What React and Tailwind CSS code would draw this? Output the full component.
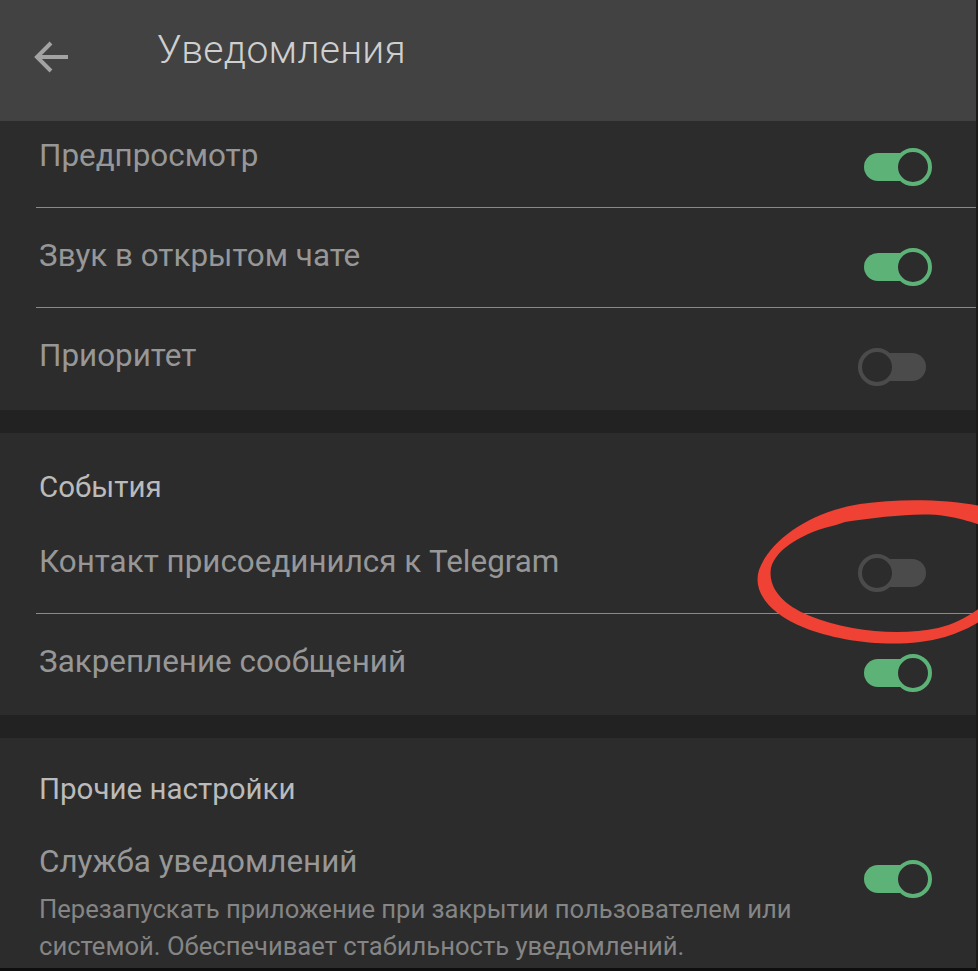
import React from "react";

function Toggle({ on }) {
  return (
    <div className="relative w-[74px] h-[40px] shrink-0">
      <div
        className={
          "absolute left-[6px] right-[6px] top-[6px] h-[28px] rounded-full " +
          (on ? "bg-[#5cb277]" : "bg-[#4b4b4b]")
        }
      />
      <div
        className={
          "absolute top-[1px] w-[38px] h-[38px] rounded-full border-[4px] bg-[#2c2c2c] " +
          (on ? "right-0 border-[#5cb277]" : "left-0 border-[#4b4b4b]")
        }
      />
    </div>
  );
}

function Row({ label, on, divider, className = "" }) {
  return (
    <div className={"relative h-[100px] flex justify-between items-start pl-[39px] pr-[44px] " + className}>
      <div className="pt-[28px] text-[31.4px] leading-[40px] text-[#979797]">{label}</div>
      <div className="pt-[39px]">
        <Toggle on={on} />
      </div>
      {divider && (
        <div className="absolute left-[36px] right-0 bottom-0 h-[1.5px] bg-[#8a8a8a]" />
      )}
    </div>
  );
}

export default function App() {
  return (
    <div
      className="relative w-[978px] h-[971px] overflow-hidden bg-[#1d1b19] flex"
      style={{ fontFamily: "Roboto, 'Noto Sans', sans-serif" }}
    >
      <div className="w-[976px] h-[971px] flex flex-col bg-[#222222]">
        {/* Header */}
        <div className="h-[121px] shrink-0 bg-[#424242] flex items-start">
          <div className="w-[157px] pt-[39px] pl-[33px]">
            <svg width="38" height="36" viewBox="0 0 38 36" fill="none">
              <path
                d="M35 18 H5 M18 4 L4 18 L18 32"
                stroke="#a3a3a3"
                strokeWidth="4"
                strokeLinecap="butt"
                strokeLinejoin="miter"
              />
            </svg>
          </div>
          <div className="pt-[26px] text-[39px] leading-[48px] font-light text-[#cfcfcf] tracking-[0.3px]">
            Уведомления
          </div>
        </div>

        {/* Section 1 */}
        <div className="h-[289px] shrink-0 overflow-hidden bg-[#2c2c2c]">
          <Row label="Предпросмотр" on divider className="-mt-[13px]" />
          <Row label="Звук в открытом чате" on divider />
          <Row label="Приоритет" on={false} />
        </div>

        <div className="h-[23px] shrink-0 bg-[#222222]" />

        {/* Section 2 */}
        <div className="h-[282px] shrink-0 bg-[#2c2c2c]">
          <div className="h-[81px] pl-[39px] pt-[34px] text-[29.5px] leading-[40px] text-[#bbbbbb]">
            События
          </div>
          <Row label="Контакт присоединился к Telegram" on={false} divider />
          <Row label="Закрепление сообщений" on />
        </div>

        <div className="h-[23px] shrink-0 bg-[#222222]" />

        {/* Section 3 */}
        <div className="h-[230px] shrink-0 bg-[#2c2c2c] flex flex-col">
          <div className="h-[80px] pl-[39px] pt-[31px] text-[29.5px] leading-[40px] text-[#bbbbbb]">
            Прочие настройки
          </div>
          <div className="flex justify-between items-start pl-[39px] pr-[44px]">
            <div className="flex flex-col">
              <div className="pt-[24px] text-[31.4px] leading-[40px] text-[#979797]">
                Служба уведомлений
              </div>
              <div className="pt-[9px] text-[25.6px] leading-[37px] text-[#858585] w-[790px]">
                Перезапускать приложение при закрытии пользователем или системой. Обеспечивает стабильность уведомлений.
              </div>
            </div>
            <div className="pt-[41px]">
              <Toggle on />
            </div>
          </div>
        </div>
        <div className="flex-1 bg-[#0e0e0e]" />
      </div>

      {/* Red hand-drawn annotation */}
      <svg
        className="absolute left-0 top-0 pointer-events-none"
        width="978"
        height="971"
        viewBox="0 0 978 971"
        fill="none"
      >
        <path
          d="M985 507 C950 499 900 498 860 504 C810 512 770 540 759 570 C752 592 770 614 805 628 C840 642 900 650 945 637 C965 631 978 623 985 618 L985 604 C970 616 955 624 938 628 C900 636 850 632 810 616 C780 604 768 586 771 568 C776 548 805 532 836 525 L845 522 C880 517 920 512 945 516 C960 518 975 523 985 527 Z"
          fill="#ef4134"
        />
      </svg>
    </div>
  );
}
